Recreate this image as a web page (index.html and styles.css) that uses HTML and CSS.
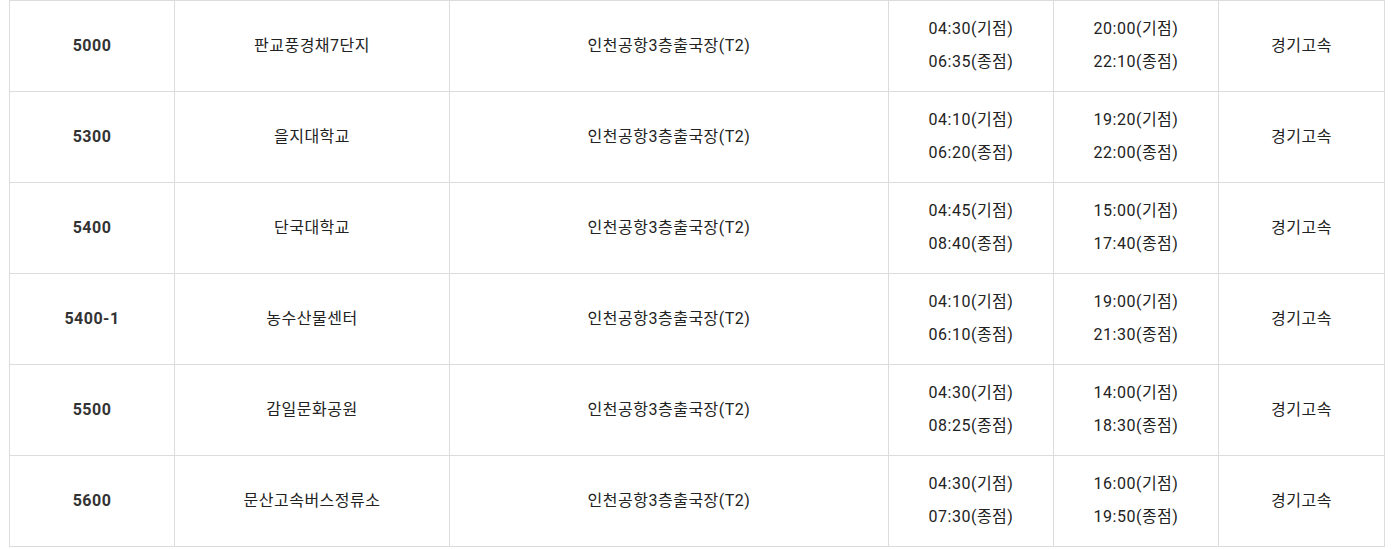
FILE: index.html
```html
<!DOCTYPE html>
<html lang="ko">
<head>
<meta charset="utf-8">
<link rel="stylesheet" href="styles.css">
</head>
<body>
<div class="wrap">
<table class="bus">
  <colgroup>
    <col class="c-no"><col class="c-from"><col class="c-to"><col class="c-t1"><col class="c-t2"><col class="c-co">
  </colgroup>
  <tbody>
    <tr><td class="no">5000</td><td>판교풍경채7단지</td><td>인천공항3층출국장(T2)</td><td><p>04:30(기점)</p><p>06:35(종점)</p></td><td><p>20:00(기점)</p><p>22:10(종점)</p></td><td>경기고속</td></tr>
    <tr><td class="no">5300</td><td>을지대학교</td><td>인천공항3층출국장(T2)</td><td><p>04:10(기점)</p><p>06:20(종점)</p></td><td><p>19:20(기점)</p><p>22:00(종점)</p></td><td>경기고속</td></tr>
    <tr><td class="no">5400</td><td>단국대학교</td><td>인천공항3층출국장(T2)</td><td><p>04:45(기점)</p><p>08:40(종점)</p></td><td><p>15:00(기점)</p><p>17:40(종점)</p></td><td>경기고속</td></tr>
    <tr><td class="no">5400-1</td><td>농수산물센터</td><td>인천공항3층출국장(T2)</td><td><p>04:10(기점)</p><p>06:10(종점)</p></td><td><p>19:00(기점)</p><p>21:30(종점)</p></td><td>경기고속</td></tr>
    <tr><td class="no">5500</td><td>감일문화공원</td><td>인천공항3층출국장(T2)</td><td><p>04:30(기점)</p><p>08:25(종점)</p></td><td><p>14:00(기점)</p><p>18:30(종점)</p></td><td>경기고속</td></tr>
    <tr><td class="no">5600</td><td>문산고속버스정류소</td><td>인천공항3층출국장(T2)</td><td><p>04:30(기점)</p><p>07:30(종점)</p></td><td><p>16:00(기점)</p><p>19:50(종점)</p></td><td>경기고속</td></tr>
  </tbody>
</table>
</div>
</body>
</html>
```
FILE: styles.css
```css
html, body {
  margin: 0;
  padding: 0;
  background: #fff;
}
body {
  font-family: Roboto, "Noto Sans CJK KR", sans-serif;
  font-size: 16px;
  letter-spacing: 0.5px;
  color: #222;
}
.wrap {
  padding-left: 9px;
}
.bus {
  border-collapse: collapse;
  table-layout: fixed;
  width: 1375px;
}
.c-no { width: 165px; }
.c-from { width: 275px; }
.c-to { width: 439px; }
.c-t1 { width: 165px; }
.c-t2 { width: 165px; }
.c-co { width: 166px; }
.bus td {
  border: 1px solid #dcdcdc;
  height: 88px;
  padding: 0 0 2px;
  text-align: center;
  vertical-align: middle;
  line-height: 33px;
}
.bus td.no {
  font-weight: 700;
  color: #333;
}
.bus p {
  margin: 0;
}
```
